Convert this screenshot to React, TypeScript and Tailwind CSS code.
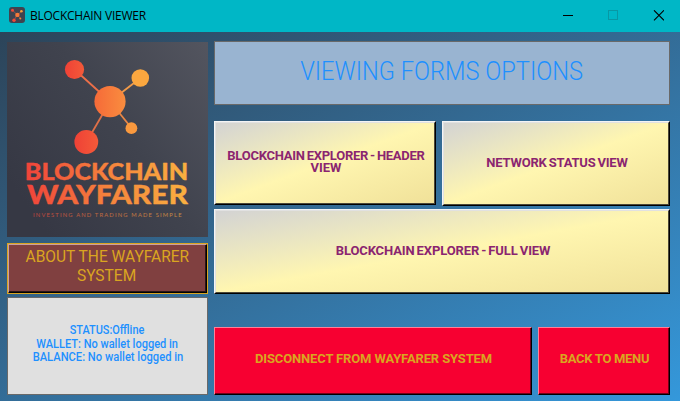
import type { ReactNode } from "react";

const FONT = "font-['Roboto','Liberation_Sans',sans-serif]";

function Line({ children, className = "" }: { children: ReactNode; className?: string }) {
  return <span className={`block whitespace-nowrap ${className}`}>{children}</span>;
}

function ViewButton({ children, className = "" }: { children: ReactNode; className?: string }) {
  return (
    <button
      className={`border border-t-[#f4f4f4] border-l-[#f4f4f4] border-r-black border-b-black ${className}`}
    >
      <span className="flex h-full w-full flex-col items-center justify-center border border-t-[#e1e1e1] border-l-[#e1e1e1] border-r-[#4a4738] border-b-[#4a4738] bg-linear-to-br from-[#d3d3d3] via-[#fff6b0] to-[#f0e199] pb-[2px] pl-[2px] text-[13px] leading-[12px] font-bold text-[#8b2570] [word-spacing:-1px]">
        {children}
      </span>
    </button>
  );
}

function DangerButton({ children, className = "" }: { children: ReactNode; className?: string }) {
  return (
    <button
      className={`border border-t-[#ff7f97] border-l-[#ff7f97] border-r-black border-b-black ${className}`}
    >
      <span className="flex h-full w-full items-center justify-center border-r border-b border-[#70001a] bg-[#f70031] pb-[3px] pl-[2px] text-[13px] leading-4 font-bold text-[#daa520]">
        {children}
      </span>
    </button>
  );
}

function Logo() {
  return (
    <svg width="201" height="195" viewBox="7 42 201 195" className="block">
      <defs>
        <linearGradient id="plate" x1="0" y1="0.7" x2="1" y2="0">
          <stop offset="0" stopColor="#363844" />
          <stop offset="0.5" stopColor="#40434e" />
          <stop offset="1" stopColor="#53555f" />
        </linearGradient>
        <linearGradient id="warm" gradientUnits="userSpaceOnUse" x1="26" y1="0" x2="187" y2="0">
          <stop offset="0" stopColor="#f0433a" />
          <stop offset="0.5" stopColor="#f5823c" />
          <stop offset="1" stopColor="#f9b040" />
        </linearGradient>
        <linearGradient id="hub">
          <stop offset="0" stopColor="#f66a38" />
          <stop offset="1" stopColor="#f98d3f" />
        </linearGradient>
        <linearGradient id="red">
          <stop offset="0" stopColor="#ef4136" />
          <stop offset="1" stopColor="#f45a39" />
        </linearGradient>
      </defs>
      <rect x="7" y="42" width="201" height="195" fill="url(#plate)" />
      <g strokeWidth="1.8">
        <path d="M74.5 69.5 110 101.5" stroke="#ec6f49" />
        <path d="M140.5 78 110 101.5" stroke="#f19a48" />
        <path d="M110 101.5 86.5 142" stroke="#df7047" />
        <path d="M110 101.5 131.5 128" stroke="#e98746" />
      </g>
      <circle cx="74.5" cy="69.5" r="9.6" fill="url(#red)" />
      <circle cx="140.3" cy="78" r="8.8" fill="#fba73f" />
      <circle cx="110" cy="101.6" r="15.6" fill="url(#hub)" />
      <circle cx="131.4" cy="128.2" r="5.9" fill="#fa993e" />
      <circle cx="86.3" cy="142" r="11.9" fill="url(#red)" />
      <g
        fill="url(#warm)"
        stroke="url(#warm)"
        strokeWidth="0.3"
        strokeLinejoin="round"
        className="font-['Lato','Liberation_Sans',sans-serif] font-black"
      >
        <text x="24.8" y="179.6" fontSize="23.3" textLength="163.5" lengthAdjust="spacingAndGlyphs">
          BLOCKCHAIN
        </text>
        <text x="27" y="203.7" fontSize="26.4" textLength="161" lengthAdjust="spacingAndGlyphs">
          WAYFARER
        </text>
      </g>
      <text
        x="33"
        y="217.2"
        fontSize="5.8"
        textLength="148.5"
        fill="url(#warm)"
        opacity="0.7"
        className="font-['Lato','Liberation_Sans',sans-serif]"
      >
        INVESTING AND TRADING MADE SIMPLE
      </text>
    </svg>
  );
}

function AppIcon() {
  return (
    <svg width="16" height="16" viewBox="0 0 16 16">
      <rect width="16" height="16" rx="3" fill="#3f4350" />
      <path d="M3.5 3.3 8.3 7.8 12.5 4.5M8.3 7.8 5 13.3M8.3 7.8 11.3 11.3" stroke="#a85c48" strokeWidth="0.8" fill="none" />
      <circle cx="3.5" cy="3.3" r="1.5" fill="#f04a38" />
      <circle cx="12.4" cy="4.3" r="1.3" fill="#f7a040" />
      <circle cx="8.4" cy="7.9" r="2.2" fill="#f87838" />
      <circle cx="11.3" cy="11.4" r="1" fill="#f08c3c" />
      <circle cx="5" cy="13.3" r="1.7" fill="#f04a38" />
    </svg>
  );
}

export default function App() {
  return (
    <div className={`flex h-[401px] w-[680px] flex-col overflow-hidden ${FONT}`}>
      <header className="flex h-8 shrink-0 items-center bg-[#00b7c6] pr-4 pb-[2px] pl-[9px]">
        <AppIcon />
        <h1 className="mt-[2px] ml-[5px] font-['Open_Sans','Liberation_Sans',sans-serif] text-[12px] leading-4 tracking-[-0.25px] whitespace-nowrap text-black">
          BLOCKCHAIN VIEWER
        </h1>
        <svg width="101" height="11" viewBox="0 0 101 11" className="ml-auto" fill="none">
          <path d="M0 5.5H10" stroke="#000" shapeRendering="crispEdges" />
          <rect x="45.5" y="0.5" width="9" height="9" stroke="#0898a4" />
          <path d="M91 0.3 101 10.3M101 0.3 91 10.3" stroke="#000" strokeWidth="1.1" />
        </svg>
      </header>
      <main className="flex flex-1 gap-1.5 bg-linear-to-br from-[#2c4459] to-[#3498db] pt-[9px] pr-[10px] pb-1.5 pl-[7px]">
        <aside className="flex w-[201px] flex-col pt-px">
          <Logo />
          <button className="mt-1.5 h-[51px] border border-[#daa520]">
            <span className="flex h-full w-full flex-col border border-t-[#c9a0a0] border-l-[#c9a0a0] border-r-black border-b-black">
              <span className="flex flex-1 flex-col items-center border-r border-b border-[#2a1515] bg-[#804040] pt-[2px] text-[16px] leading-[19px] font-normal text-[#daa520]">
                <Line className="scale-x-[0.97]">ABOUT THE WAYFARER</Line>
                <Line className="scale-x-[0.97]">SYSTEM</Line>
              </span>
            </span>
          </button>
          <section className="mt-[3px] flex h-[98px] flex-col items-center justify-center border border-[#696969] bg-[#e0e0e0] pb-[3px] text-[12px] leading-[13.5px] font-medium text-[#1e90ff]">
            <Line className="scale-x-[0.91]">STATUS:Offline</Line>
            <Line className="scale-x-[0.92]">WALLET: No wallet logged in</Line>
            <Line className="scale-x-[0.93]">BALANCE: No wallet logged in</Line>
          </section>
        </aside>
        <div className="flex w-[456px] flex-col">
          <h2 className="flex h-16 items-center justify-center border border-[#696969] bg-[#99b4d1] pb-[3px] text-[25px] leading-8 font-light text-[#1e90ff]">
            <Line className="scale-x-[0.945]">VIEWING FORMS OPTIONS</Line>
          </h2>
          <div className="mt-4 flex h-[85px] items-start gap-1.5">
            <ViewButton className="h-[84px] w-[222px]">
              <Line className="tracking-[-0.26px]">BLOCKCHAIN EXPLORER - HEADER</Line>
              <Line>VIEW</Line>
            </ViewButton>
            <ViewButton className="h-[85px] w-[228px]">
              <Line className="tracking-[-0.2px]">NETWORK STATUS VIEW</Line>
            </ViewButton>
          </div>
          <ViewButton className="mt-[3px] h-[85px]">
            <Line className="tracking-[-0.12px]">BLOCKCHAIN EXPLORER - FULL VIEW</Line>
          </ViewButton>
          <div className="mt-[33px] flex h-[68px] gap-1.5">
            <DangerButton className="w-[318px]">
              <Line className="tracking-[-0.14px]">DISCONNECT FROM WAYFARER SYSTEM</Line>
            </DangerButton>
            <DangerButton className="w-[132px]">
              <Line className="tracking-[-0.3px]">BACK TO MENU</Line>
            </DangerButton>
          </div>
        </div>
      </main>
    </div>
  );
}
